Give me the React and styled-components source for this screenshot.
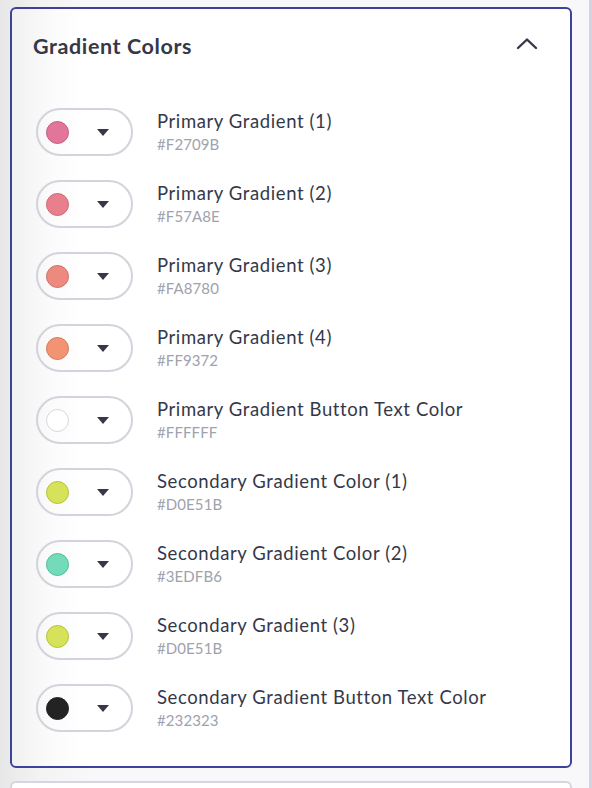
import React from "react";
import styled, { createGlobalStyle } from "styled-components";

const Global = createGlobalStyle`
  html, body { margin: 0; padding: 0; }
  body {
    background: #f8f8fa;
    font-family: "Lato", "Noto Sans", sans-serif;
    -webkit-font-smoothing: antialiased;
  }
`;

const Page = styled.div`
  width: 592px;
  height: 788px;
  box-sizing: border-box;
  overflow: hidden;
  padding: 7px 0 0 10px;
  background: linear-gradient(to right, #e7e7e7 0px, #f3f3f3 40px, #f8f8fa 90px);
  display: flex;
  flex-direction: column;
  gap: 13px;
  border-right: 3px solid #d3d5de;
`;

const Card = styled.section`
  width: 562px;
  box-sizing: border-box;
  border: 2px solid #3c4399;
  border-radius: 6px;
  background: linear-gradient(to right, #f1f1f1 0px, #fbfbfb 40px, #ffffff 75px);
  padding: 0 0 34px 0;
  flex-shrink: 0;
`;

const NextCard = styled.div`
  width: 562px;
  height: 40px;
  box-sizing: border-box;
  border: 2px solid #d6d7de;
  border-radius: 6px;
  background: #ffffff;
  flex-shrink: 0;
`;

const Header = styled.div`
  display: flex;
  align-items: center;
  justify-content: space-between;
  height: 74px;
  padding: 0 32px 0 21px;
  box-sizing: border-box;
`;

const Title = styled.h2`
  margin: 0;
  font-size: 21.5px;
  font-weight: 700;
  color: #353849;
  letter-spacing: 0.6px;
`;

const ChevronWrap = styled.span`
  display: flex;
  position: relative;
  top: -2px;
`;

const List = styled.div`
  display: flex;
  flex-direction: column;
  gap: 24px;
  padding: 25px 0 0 24px;
`;

const Row = styled.div`
  display: flex;
  align-items: center;
  gap: 24px;
`;

const Picker = styled.button`
  width: 97px;
  height: 48px;
  box-sizing: border-box;
  border: 2px solid #d2d3dc;
  border-radius: 24px;
  background: transparent;
  display: flex;
  align-items: center;
  padding: 0 0 0 8px;
  cursor: pointer;
`;

const Swatch = styled.span`
  width: 23px;
  height: 23px;
  box-sizing: border-box;
  border-radius: 50%;
  background: ${(p) => p.$color};
  border: 1px solid ${(p) => p.$edge};
  flex-shrink: 0;
`;

const Caret = styled.span`
  margin-left: 28px;
  width: 0;
  height: 0;
  border-left: 6.5px solid transparent;
  border-right: 6.5px solid transparent;
  border-top: 7px solid #353849;
`;

const Text = styled.div`
  display: flex;
  flex-direction: column;
  gap: 3px;
  position: relative;
  top: -1px;
`;

const Label = styled.div`
  font-size: 18.5px;
  color: #353849;
  line-height: 22px;
  letter-spacing: 0.6px;
`;

const Hex = styled.div`
  font-size: 15px;
  color: #a0a2ad;
  line-height: 18px;
  letter-spacing: 0.1px;
`;

const Chevron = () => (
  <svg width="22" height="14" viewBox="0 0 22 14" fill="none">
    <path d="M2 11 L11 2.5 L20 11" stroke="#353849" strokeWidth="2.4" strokeLinecap="round" strokeLinejoin="round" />
  </svg>
);

const items = [
  { name: "Primary Gradient (1)", hex: "#F2709B", color: "#e2769a", edge: "#c45f82" },
  { name: "Primary Gradient (2)", hex: "#F57A8E", color: "#e77f8c", edge: "#c96a76" },
  { name: "Primary Gradient (3)", hex: "#FA8780", color: "#ec8a80", edge: "#cd7269" },
  { name: "Primary Gradient (4)", hex: "#FF9372", color: "#f29473", edge: "#d37b5d" },
  { name: "Primary Gradient Button Text Color", hex: "#FFFFFF", color: "#ffffff", edge: "#d6d7dd" },
  { name: "Secondary Gradient Color (1)", hex: "#D0E51B", color: "#d6e25a", edge: "#b4c23a" },
  { name: "Secondary Gradient Color (2)", hex: "#3EDFB6", color: "#73dbb9", edge: "#52bc9a" },
  { name: "Secondary Gradient (3)", hex: "#D0E51B", color: "#d6e25a", edge: "#b4c23a" },
  { name: "Secondary Gradient Button Text Color", hex: "#232323", color: "#232323", edge: "#232323" },
];

export default function App() {
  return (
    <>
      <Global />
      <Page>
        <Card>
          <Header>
            <Title>Gradient Colors</Title>
            <ChevronWrap>
              <Chevron />
            </ChevronWrap>
          </Header>
          <List>
            {items.map((it) => (
              <Row key={it.name}>
                <Picker aria-label={it.name}>
                  <Swatch $color={it.color} $edge={it.edge} />
                  <Caret />
                </Picker>
                <Text>
                  <Label>{it.name}</Label>
                  <Hex>{it.hex}</Hex>
                </Text>
              </Row>
            ))}
          </List>
        </Card>
        <NextCard />
      </Page>
    </>
  );
}
